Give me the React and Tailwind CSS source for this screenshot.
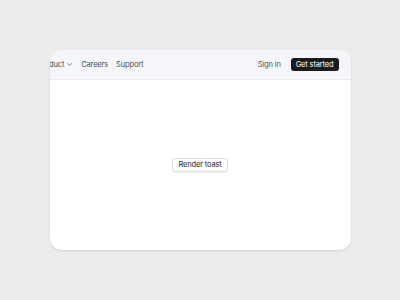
export default function App() {
  return (
    <div className="w-[400px] h-[300px] bg-[#ececec] flex items-center justify-center" style={{ fontFamily: 'Inter, "Noto Sans", sans-serif' }}>
      <div className="w-[301px] h-[200px] bg-white rounded-[12px] overflow-hidden flex flex-col shadow-[0_1px_2px_rgba(0,0,0,0.12)]">
        <div className="h-[30px] shrink-0 bg-[#f5f6f9] border-b border-[#e6e8ec] flex items-center justify-between pr-[12px]">
          <nav className="flex items-center gap-[8px] text-[7.5px] tracking-[-0.02em] text-[#4b4d52] ml-[-12px]">
            <span className="flex items-center gap-[2px]">
              Product
              <svg width="7" height="7" viewBox="0 0 24 24" fill="none" stroke="currentColor" strokeWidth="2.5" strokeLinecap="round" strokeLinejoin="round">
                <path d="m6 9 6 6 6-6" />
              </svg>
            </span>
            <span>Careers</span>
            <span>Support</span>
          </nav>
          <div className="flex items-center gap-[10px] text-[7.5px] tracking-[-0.02em]">
            <span className="text-[#4b4d52]">Sign in</span>
            <button className="bg-[#1c1c1f] text-white rounded-[3px] px-[5px] h-[13px] leading-none">Get started</button>
          </div>
        </div>
        <div className="flex-1 flex items-center justify-center">
          <button className="bg-white border border-[#dcdde0] rounded-[3px] px-[5px] h-[14px] text-[7.5px] tracking-[-0.02em] leading-none text-[#222] shadow-[0_1px_1px_rgba(0,0,0,0.06)]">
            Render toast
          </button>
        </div>
      </div>
    </div>
  );
}
